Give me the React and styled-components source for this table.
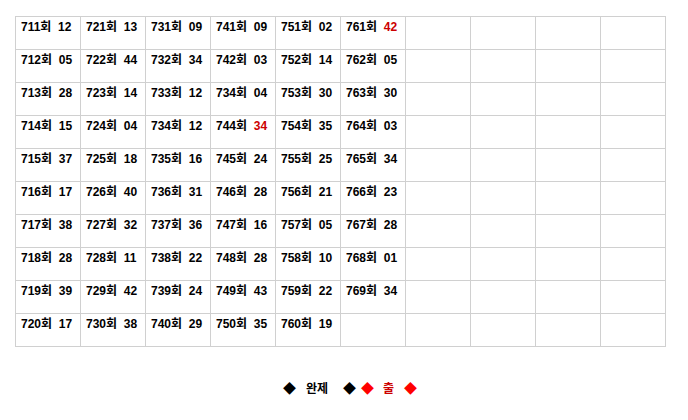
import React from 'react'
import styled, { createGlobalStyle } from 'styled-components'

const GlobalStyle = createGlobalStyle`
  body {
    margin: 0;
    background: #fff;
    font-family: "Liberation Sans", "Noto Sans CJK KR", sans-serif;
  }
`

const Page = styled.div`
  width: 688px;
  height: 420px;
  padding: 16px 0 0 15px;
  box-sizing: border-box;
`

const Table = styled.table`
  border-collapse: collapse;
  table-layout: fixed;
`

const Cell = styled.td`
  width: 65px;
  height: 33px;
  padding: 3px 0 0 5px;
  box-sizing: border-box;
  border: 1px solid #d0d0d0;
  vertical-align: top;
  font-size: 12px;
  font-weight: bold;
  color: #000;
  white-space: nowrap;
  line-height: 15px;
`

const Num = styled.span`
  color: ${p => (p.hot ? '#cc0000' : '#000')};
`

const Legend = styled.div`
  display: flex;
  justify-content: center;
  align-items: center;
  margin-top: 31px;
  margin-left: -3px;
  font-size: 12px;
  font-weight: bold;
`

const Mark = styled.span`
  color: ${p => (p.red ? '#ff0000' : '#000')};
  font-size: 13px;
  margin-right: ${p => p.after || 0}px;
`

const Word = styled.span`
  color: ${p => (p.red ? '#cc0000' : '#000')};
  margin-right: ${p => p.after || 0}px;
`

const cols = [
  ['12', '05', '28', '15', '37', '17', '38', '28', '39', '17'],
  ['13', '44', '14', '04', '18', '40', '32', '11', '42', '38'],
  ['09', '34', '12', '12', '16', '31', '36', '22', '24', '29'],
  ['09', '03', '04', '34', '24', '28', '16', '28', '43', '35'],
  ['02', '14', '30', '35', '25', '21', '05', '10', '22', '19'],
  ['42', '05', '30', '03', '34', '23', '28', '01', '34', null],
]

const hot = { '5-0': true, '3-3': true }

// the source page shows 734 in place of 743, keep it as is
const roundOf = (c, r) => (c === 3 && r === 2 ? 734 : 711 + c * 10 + r)

const App = () => {
  const rows = Array.from({ length: 10 }, (_, r) => r)
  return (
    <Page>
      <GlobalStyle />
      <Table>
        <tbody>
          {rows.map(r => (
            <tr key={r}>
              {Array.from({ length: 10 }, (_, c) => {
                const val = cols[c] ? cols[c][r] : null
                return (
                  <Cell key={c}>
                    {val && (
                      <>
                        {roundOf(c, r)}회&nbsp; <Num hot={hot[`${c}-${r}`]}>{val}</Num>
                      </>
                    )}
                  </Cell>
                )
              })}
            </tr>
          ))}
        </tbody>
      </Table>
      <Legend>
        <Mark after={10}>◆</Mark>
        <Word after={15}>완제</Word>
        <Mark after={5}>◆</Mark>
        <Mark red after={9}>◆</Mark>
        <Word red after={10}>출</Word>
        <Mark red>◆</Mark>
      </Legend>
    </Page>
  )
}

export default App
